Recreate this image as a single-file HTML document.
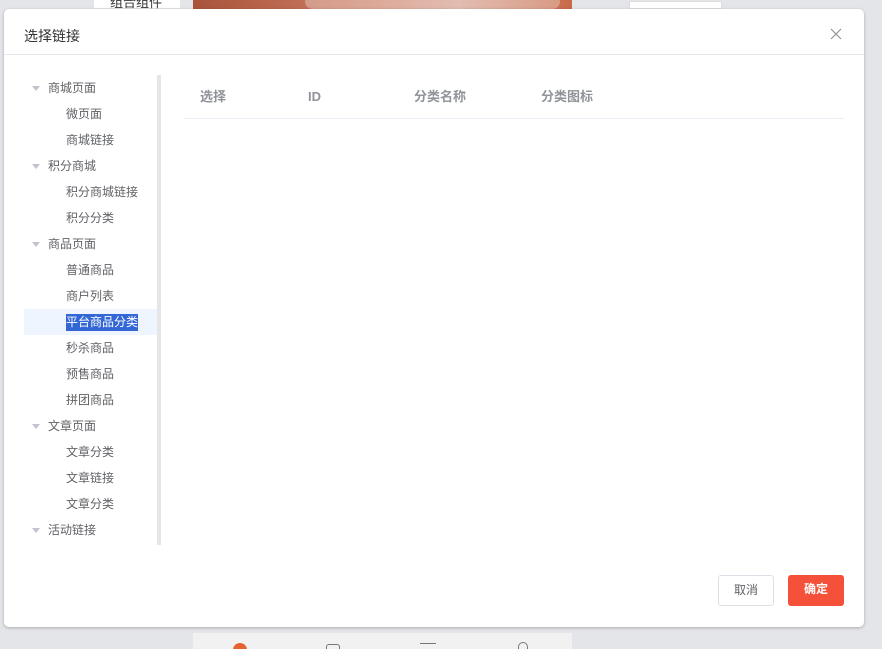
<!DOCTYPE html>
<html><head><meta charset="utf-8"><style>
*{margin:0;padding:0;box-sizing:border-box}
html,body{width:882px;height:649px;overflow:hidden}
body{background:#e4e5e9;position:relative;font-family:"Liberation Sans","Noto Sans CJK SC",sans-serif;font-size:12px;color:#606266}
.abs{position:absolute}
.dlg{left:4px;top:9px;width:860px;height:618px;background:#fff;border-radius:5px;box-shadow:0 1px 3px rgba(0,0,0,.25)}
.ttl{left:20px;top:17px;font-size:14px;color:#303133}
.hdl{left:0;top:45px;width:860px;height:1px;background:#e8e8ec}
.x{left:825px;top:18px;width:14px;height:14px}
.tree{left:20px;top:66px;width:133px}
.row{height:26px;line-height:26px;position:relative}
.l1{padding-left:24px;color:#606266}
.l1:before{content:"";position:absolute;left:8px;top:11px;border-left:4px solid transparent;border-right:4px solid transparent;border-top:5px solid #c0c4cc}
.l2{padding-left:42px}
.sel{background:#eef5ff}
.sel span{background:#3367d6;color:#fff;display:inline-block;line-height:17px}
.track{left:153px;top:66px;width:4px;height:470px;background:#e6e6e9}
.th{top:80px;height:16px;line-height:16px;font-weight:bold;color:#909399;font-size:13px}
.tline{left:180px;top:109px;width:660px;height:1px;background:#ebeef5}
.btn{top:566px;width:56px;height:31px;border-radius:3px;line-height:29px;text-align:center;font-size:12px}
</style></head><body>
<div class="abs" style="left:94px;top:0;width:86px;height:8px;background:#fff"></div>
<div class="abs" style="left:110px;top:-8px;font-size:13px;color:#333">组合组件</div>
<div class="abs" style="left:193px;top:0;width:379px;height:9px;background:linear-gradient(90deg,#a8523a,#c97a60 40%,#d6a090 70%,#c66a48)"></div>
<div class="abs" style="left:305px;top:-6px;width:255px;height:15px;border-radius:8px;background:rgba(255,255,255,.3)"></div>
<div class="abs" style="left:629px;top:1px;width:93px;height:8px;background:#fff;border:1px solid #ddd"></div>
<div class="abs" style="left:193px;top:633px;width:379px;height:16px;background:#f1f1f1"></div>
<div class="abs" style="left:233px;top:643px;width:14px;height:14px;border-radius:50%;background:#e8622e"></div>
<div class="abs" style="left:326px;top:644px;width:14px;height:10px;border:1px solid #777;border-radius:3px"></div>
<div class="abs" style="left:420px;top:643px;width:16px;height:10px;border-top:1px solid #777"></div>
<div class="abs" style="left:518px;top:642px;width:10px;height:12px;border:1px solid #777;border-radius:5px"></div>

<div class="abs dlg">
<div class="abs ttl">选择链接</div>
<svg class="abs x" viewBox="0 0 14 14"><path d="M2 2L12 12M12 2L2 12" stroke="#909399" stroke-width="1.2"/></svg>
<div class="abs hdl"></div>
<div class="abs tree">
<div class="row l1">商城页面</div>
<div class="row l2">微页面</div>
<div class="row l2">商城链接</div>
<div class="row l1">积分商城</div>
<div class="row l2">积分商城链接</div>
<div class="row l2">积分分类</div>
<div class="row l1">商品页面</div>
<div class="row l2">普通商品</div>
<div class="row l2">商户列表</div>
<div class="row l2 sel"><span>平台商品分类</span></div>
<div class="row l2">秒杀商品</div>
<div class="row l2">预售商品</div>
<div class="row l2">拼团商品</div>
<div class="row l1">文章页面</div>
<div class="row l2">文章分类</div>
<div class="row l2">文章链接</div>
<div class="row l2">文章分类</div>
<div class="row l1">活动链接</div>
</div>
<div class="abs track"></div>
<div class="abs th" style="left:196px">选择</div>
<div class="abs th" style="left:304px">ID</div>
<div class="abs th" style="left:410px">分类名称</div>
<div class="abs th" style="left:537px">分类图标</div>
<div class="abs tline"></div>
<div class="abs btn" style="left:714px;border:1px solid #dcdfe6;color:#606266">取消</div>
<div class="abs btn" style="left:784px;background:#f4503a;color:#fff;font-weight:bold">确定</div>
</div>
</body></html>
